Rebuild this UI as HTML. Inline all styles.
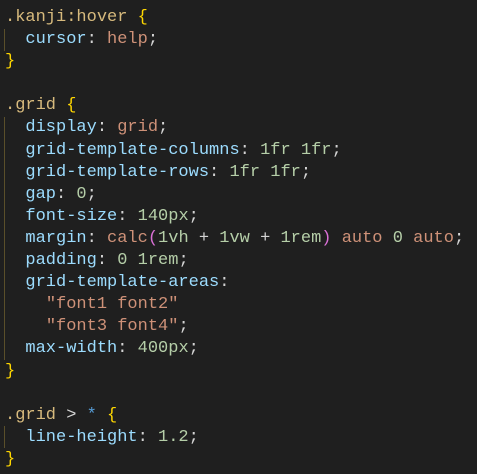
<!DOCTYPE html>
<html><head><style>
html,body{margin:0;padding:0;background:#1f1f1f;width:477px;height:474px;overflow:hidden}
pre{margin:0;position:absolute;left:5px;top:7px;font-family:"Liberation Mono","DejaVu Sans Mono",monospace;font-size:17px;line-height:22.1px;color:#d4d4d4}
.s{color:#d7ba7d}.p{color:#9cdcfe}.v{color:#ce9178}.n{color:#b5cea8}.b{color:#ffd700}.m{color:#da70d6}.k{color:#569cd6}
.g{position:absolute;left:4px;width:1px;background:#5a4f2a}
</style></head><body>
<div class="g" style="top:29px;height:22px"></div>
<div class="g" style="top:117px;height:243px"></div>
<div class="g" style="top:426px;height:22px"></div>
<pre><span class="s">.kanji:hover</span> <span class="b">{</span>
  <span class="p">cursor</span>: <span class="v">help</span>;
<span class="b">}</span>

<span class="s">.grid</span> <span class="b">{</span>
  <span class="p">display</span>: <span class="v">grid</span>;
  <span class="p">grid-template-columns</span>: <span class="n">1fr</span> <span class="n">1fr</span>;
  <span class="p">grid-template-rows</span>: <span class="n">1fr</span> <span class="n">1fr</span>;
  <span class="p">gap</span>: <span class="n">0</span>;
  <span class="p">font-size</span>: <span class="n">140px</span>;
  <span class="p">margin</span>: <span class="v">calc</span><span class="m">(</span><span class="n">1vh</span> + <span class="n">1vw</span> + <span class="n">1rem</span><span class="m">)</span> <span class="v">auto</span> <span class="n">0</span> <span class="v">auto</span>;
  <span class="p">padding</span>: <span class="n">0</span> <span class="n">1rem</span>;
  <span class="p">grid-template-areas</span>:
    <span class="v">"font1 font2"</span>
    <span class="v">"font3 font4"</span>;
  <span class="p">max-width</span>: <span class="n">400px</span>;
<span class="b">}</span>

<span class="s">.grid</span> &gt; <span class="k">*</span> <span class="b">{</span>
  <span class="p">line-height</span>: <span class="n">1.2</span>;
<span class="b">}</span></pre>
</body></html>
